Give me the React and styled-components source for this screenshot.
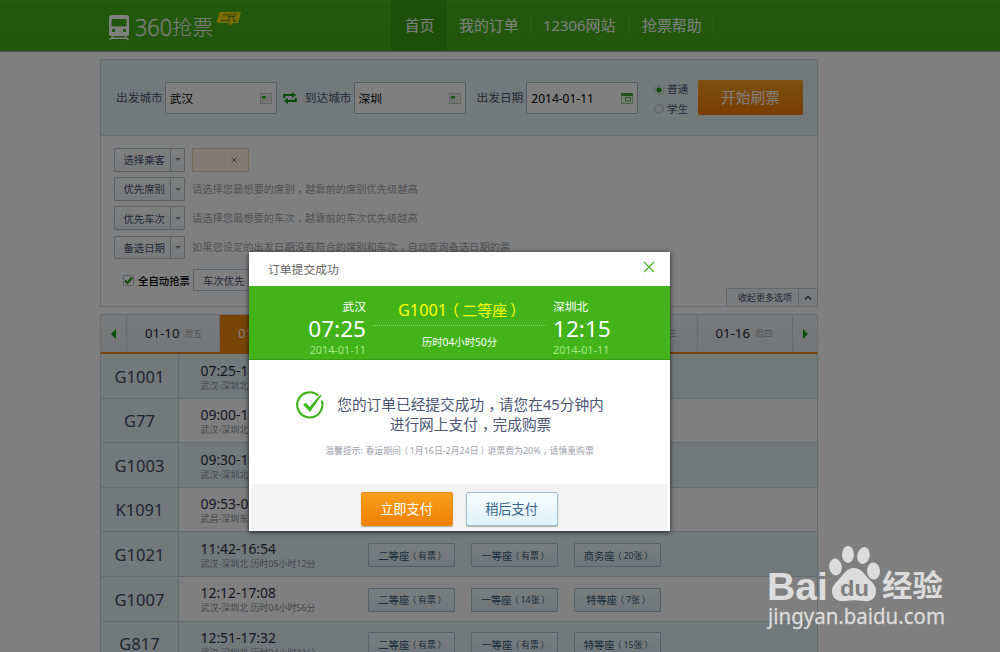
import React from 'react';
import styled, { createGlobalStyle, css } from 'styled-components';

const COLORS = {
  green: '#43b31a',
  orange: '#f08c14',
  ink: '#4a5272',
  blueBg: '#e7f1f7',
  blueLine: '#c3d6e0',
  line: '#d2dae0',
  muted: '#a4a4a8',
};

const GlobalStyle = createGlobalStyle`
  *, *::before, *::after {
    box-sizing: border-box;
  }

  html, body {
    margin: 0;
    height: 652px;
    overflow: hidden;
    background: white;
  }

  body {
    font-family: 'Noto Sans', 'Noto Sans CJK SC', sans-serif;
    font-size: 12px;
    line-height: 1;
    color: ${COLORS.ink};
  }
`;

const Screen = styled.div`
  position: relative;
  width: 1000px;
  height: 652px;
  overflow: hidden;
  white-space: nowrap;
`;

const MARK_SHIFT = {
  '，': '0.28em',
  '（': '-0.2em',
  '）': '0.2em',
};

// Full-width punctuation is nudged to the middle of its cell
const Mark = styled.span`
  display: inline-block;
  transform: translateX(${p => MARK_SHIFT[p.children]});
`;

const Text = ({ children }) =>
  children.split(/([，（）])/).map((part, i) => (i % 2 ? <Mark key={i}>{part}</Mark> : part));

/* Header */

const Header = styled.header`
  display: flex;
  height: 51px;
  padding-left: 108px;
  background: linear-gradient(#4abb20, #45b31b 10%, #43ad18);
  box-shadow: 0 1px 1px #b6a8ba;
`;

const Logo = styled.svg`
  width: 283px;
  height: 51px;
  flex-shrink: 0;
`;

const Nav = styled.nav`
  display: flex;
`;

const HomeLink = styled.a`
  width: 56px;
  height: 51px;
  display: flex;
  align-items: center;
  justify-content: center;
  font-size: 14.8px;
  color: white;
  background: #38a012;
  border-left: 1px solid #399a16;
`;

const NavLink = styled.a`
  width: ${p => p.width}px;
  height: 19px;
  margin-top: 16px;
  padding-left: 12px;
  display: flex;
  align-items: center;
  font-size: 14.9px;
  color: white;
  border-right: 1px solid #5cbc38;
`;

/* Search form */

const Main = styled.main`
  width: 718px;
  margin: 8px 0 0 100px;
`;

const SearchBar = styled.form`
  display: flex;
  align-items: center;
  height: 77px;
  padding: 1px 0 0 15px;
  background: ${COLORS.blueBg};
  border: 1px solid ${COLORS.blueLine};
`;

const Field = styled.label`
  display: flex;
  align-items: center;
  gap: 2px;
  font-size: 11.7px;
`;

const Input = styled.span`
  display: flex;
  align-items: center;
  justify-content: space-between;
  width: 112px;
  height: 32px;
  padding: 1px 4px 0;
  font-size: 11.7px;
  color: black;
  background: white;
  border: 1px solid #aeb8c2;
  border-radius: 1px;
`;

const SwapIcon = styled.svg`
  width: 14px;
  height: 12px;
  margin: 0 8px 0 6px;
`;

const DateField = styled(Field)`
  margin-left: 11px;

  ${Input} {
    margin-left: 1px;
    font-size: 12px;
  }
`;

const Radios = styled.div`
  display: flex;
  flex-direction: column;
  gap: 9.5px;
  margin: 3px 0 0 16px;
`;

const RadioLabel = styled.label`
  display: flex;
  align-items: center;
  gap: 3px;
  font-size: 10.4px;
`;

const Radio = styled.span`
  width: 10px;
  height: 10px;
  border: 1px solid #b6bfc6;
  border-radius: 50%;
  background: ${p => (p.checked ? 'radial-gradient(#139a13 0 2.3px, white 3px)' : '#e8eef2')};
`;

const SubmitButton = styled.button`
  width: 105px;
  height: 35px;
  margin: -2px 0 0 10px;
  padding: 0;
  border: none;
  border-radius: 2px;
  font: inherit;
  font-size: 14.8px;
  color: white;
  background: linear-gradient(#f9a01e, #f27a00);
`;

/* Options panel */

const Options = styled.section`
  display: flex;
  flex-direction: column;
  height: 171px;
  padding: 12px 0 0 13px;
  border: 1px solid ${COLORS.line};
  border-top: none;
`;

const OptionRow = styled.div`
  display: flex;
  align-items: center;
  gap: 7px;
  height: 29.2px;
  flex-shrink: 0;
  padding-bottom: 5.4px;
`;

const SplitButton = styled.div`
  display: flex;
  width: 71px;
  height: 23.8px;
  font-size: 10.4px;
  border: 1px solid #b6c4ce;
  border-radius: 1px;
  background: linear-gradient(white, #eff4f8);
`;

const SplitLabel = styled.span`
  flex: 1;
  display: flex;
  align-items: center;
  justify-content: flex-end;
  padding: 1px 5px 0 0;
  border-right: 1px solid #b6c4ce;
`;

const SplitCaret = styled.span`
  width: 13px;
  display: flex;
  align-items: center;
  justify-content: center;

  &::after {
    content: '';
    border: 3px solid transparent;
    border-top-color: #848d96;
    border-bottom: none;
  }
`;

const Passenger = styled.span`
  display: flex;
  align-items: center;
  justify-content: flex-end;
  width: 57px;
  height: 23.8px;
  padding-right: 11px;
  border: 1px solid #ecd5ad;
  border-radius: 1px;
  background: #fff6e6;
`;

const Hint = styled.span`
  font-size: 10.27px;
  color: ${COLORS.muted};
`;

const AutoRow = styled.div`
  display: flex;
  align-items: center;
  flex-shrink: 0;
  height: 22px;
  margin-top: 4px;
  padding-left: 9px;
  font-size: 10.4px;
`;

const Checkbox = styled.span`
  display: flex;
  align-items: center;
  justify-content: center;
  width: 11px;
  height: 11px;
  margin: 2px 4px 0 0;
  border: 1px solid #b8c2ca;
  border-radius: 1px;
`;

const AutoLabel = styled.span`
  width: 55px;
  padding-top: 2px;
  color: black;
  font-weight: 500;
`;

const PrioritySelect = styled.span`
  display: flex;
  align-items: center;
  width: 90px;
  height: 22px;
  padding: 2px 0 0 9px;
  border: 1px solid #b6c0ca;
`;

const Collapse = styled.div`
  display: flex;
  align-self: flex-end;
  flex-shrink: 0;
  width: 92px;
  height: 18px;
  margin: -3px -1px 0 0;
  font-size: 9px;
  background: #f2f6f9;
  border: 1px solid #c8d1d9;
  border-bottom: none;
`;

const CollapseLabel = styled.span`
  flex: 1;
  display: flex;
  align-items: center;
  padding-left: 11px;
  border-right: 1px solid #c8d1d9;
`;

const CollapseIcon = styled.svg`
  width: 18px;
  height: 16px;
`;

/* Date tabs */

const Tabs = styled.div`
  display: flex;
  height: 40px;
  margin-top: 7px;
  border: 1px solid ${COLORS.line};
  border-bottom: 2px solid ${COLORS.orange};
  background: linear-gradient(#f2f5f8, #e6ecf1);
`;

const TabArrow = styled.span`
  display: flex;
  align-items: center;
  justify-content: center;
  width: 25px;

  &::after {
    content: '';
    border: 5px solid transparent;
    ${p =>
      p.direction === 'left'
        ? css`
            border-right-color: #0aa00a;
            border-left: none;
          `
        : css`
            border-left-color: #0aa00a;
            border-right: none;
          `}
  }
`;

const Tab = styled.span`
  flex: ${p => (p.first ? '0 0 93px' : '1')};
  display: flex;
  align-items: center;
  gap: 5px;
  padding-left: 18px;
  font-size: 13.2px;
  color: ${p => (p.active ? 'white' : '#1d1f38')};
  background: ${p => (p.active ? '#f28a0c' : 'none')};
  border-left: 1px solid #cfd9e0;

  & + ${TabArrow} {
    border-left: 1px solid #cfd9e0;
  }
`;

const Weekday = styled.small`
  font-size: 8.8px;
  color: ${p => (p.active ? 'white' : '#a6aab0')};
  padding-top: 2px;
`;

/* Train list */

const Train = styled.div`
  display: flex;
  height: 44.6px;
  background: ${p => (p.tinted ? COLORS.blueBg : 'white')};
  border: 1px solid ${COLORS.blueLine};
  border-top: none;
`;

const TrainCode = styled.strong`
  display: flex;
  align-items: center;
  justify-content: center;
  width: 78px;
  padding-top: 2px;
  font-size: 16.5px;
  font-weight: 400;
  color: #3f4865;
  background: ${COLORS.blueBg};
  border-right: 1px solid ${COLORS.blueLine};
`;

const TrainTimes = styled.div`
  width: 189px;
  padding: 8.500px 0 0 21.5px;
`;

const TimeRange = styled.div`
  font-size: 13.9px;
  line-height: 15px;
  color: #2a2c46;
`;

const Route = styled.div`
  font-size: 8.95px;
  line-height: 15px;
  color: #8c9097;
`;

const Seats = styled.div`
  display: flex;
  align-items: center;
  gap: 16px;
  padding-top: 2px;
`;

const Seat = styled.span`
  display: flex;
  align-items: center;
  justify-content: center;
  width: 87px;
  height: 24px;
  padding-top: 1px;
  font-size: 10.3px;
  color: #31587c;
  background: linear-gradient(#f2fafd, #dfedf3);
  border: 1px solid #a6c2d0;
  border-radius: 1px;
`;

const SeatCount = styled.small`
  padding-top: 1px;
  font-size: 8.9px;
`;

/* Dialog */

const Overlay = styled.div`
  position: absolute;
  inset: 0;
  background: rgba(0, 0, 0, 0.5);
`;

const Dialog = styled.section`
  position: absolute;
  left: 249px;
  top: 252px;
  width: 421px;
  height: 279px;
  display: flex;
  flex-direction: column;
  background: white;
  box-shadow: 0 1px 5px rgba(0, 0, 0, 0.75);
`;

const DialogHeader = styled.header`
  display: flex;
  justify-content: space-between;
  height: 34px;
  padding: 12px 15px 0 19px;
  font-size: 11.8px;
  color: #666;
`;

const CloseIcon = styled.svg`
  width: 12px;
  height: 12px;
  margin-top: -3px;
`;

const Trip = styled.div`
  display: flex;
  height: 74px;
  color: white;
  background: ${COLORS.green};
  border-bottom: 1px solid #3a9f16;
`;

const Station = styled.div`
  width: 117px;
  padding-top: 13px;
  text-align: ${p => p.align};
`;

const StationName = styled.div`
  font-size: 11.8px;
  line-height: 15px;
`;

const StationTime = styled.div`
  font-size: 22.6px;
  line-height: 29px;
`;

const StationDate = styled.div`
  font-size: 10.8px;
  line-height: 14px;
  color: #a4ec82;
`;

const TripInfo = styled.div`
  display: flex;
  flex-direction: column;
  width: 173px;
  margin: 0 7px;
`;

const TripTrain = styled.div`
  height: 40px;
  padding: 15px 0 0 25px;
  font-size: 16.3px;
  line-height: 18px;
  color: #ff0;
  border-bottom: 1px dotted #8bd66c;
`;

const TripSeat = styled.span`
  font-size: 15px;
`;

const Duration = styled.div`
  padding: 10.5px 0 0 49px;
  font-size: 10.3px;
  line-height: 11px;
`;

const Result = styled.div`
  display: flex;
  flex-direction: column;
  align-items: center;
  height: 124px;
  padding-top: 30px;
`;

const ResultMessage = styled.div`
  display: flex;
  gap: 12px;
  margin-left: -20px;
  height: 54px;
`;

const CheckIcon = styled.svg`
  width: 30px;
  height: 30px;
`;

const Message = styled.p`
  margin: 5px 0 0;
  font-size: 14.7px;
  line-height: 19.5px;
  text-align: center;
  color: #4c5473;
`;

const Tip = styled.p`
  margin: 1px 0 0;
  font-size: 8.9px;
  line-height: 12px;
  color: #a0a0ac;
`;

const DialogFooter = styled.footer`
  display: flex;
  flex: 1;
  gap: 13px;
  margin: 0 2px 1px;
  padding: 8px 0 0 110px;
  background: #f3f3f3;
`;

const DialogButton = styled.button`
  width: 92px;
  height: 34px;
  padding: 1px 1px 0 0;
  font: inherit;
  font-size: 13.2px;
  color: ${p => (p.primary ? 'white' : '#36648a')};
  background: ${p =>
    p.primary ? 'linear-gradient(#f9a01c, #f08000)' : 'linear-gradient(#f8fdff, #def1f9)'};
  border: 1px solid ${p => (p.primary ? '#ec8c12' : '#9bbccb')};
  border-radius: 2px;
  box-shadow: 0 1px 1px rgba(80, 80, 80, 0.45);
`;

const Watermark = styled.svg`
  position: absolute;
  left: 760px;
  top: 540px;
  width: 190px;
  height: 94px;
`;

const GridIcon = () => (
  <svg width="12" height="11" viewBox="0 0 12 11">
    <rect x=".5" y=".5" width="11" height="10" fill="#f0f2f0" stroke="#c0cdc3" />
    <path d="M4 1v9M8 1v9M1 4h10M1 7h10" stroke="#dbe1dc" />
    <path d="M2 3h4v2.500H2z" fill="#2faf1c" />
  </svg>
);

const CalendarIcon = () => (
  <svg width="12" height="11" viewBox="0 0 12 11">
    <rect x=".5" y=".5" width="11" height="10" fill="#f0f8ee" stroke="#a5cf9d" />
    <path d="M0 0h12v3H0z" fill="#45a833" />
    <rect x="4.5" y="4.5" width="5" height="3.5" fill="none" stroke="#68ba59" />
  </svg>
);

const NAV_LINKS = [
  { label: '我的订单', width: 84 },
  { label: '12306网站', width: 99 },
  { label: '抢票帮助', width: 84 },
];

const DATES = [
  ['01-10', '周五'],
  ['01-11', '周六'],
  ['01-12', '周日'],
  ['01-13', '周一'],
  ['01-14', '周二'],
  ['01-15', '周三'],
  ['01-16', '周四'],
];

const HINTS = [
  ['优先席别', '请选择您最想要的席别，越靠前的席别优先级越高'],
  ['优先车次', '请选择您最想要的车次，越靠前的车次优先级越高'],
  ['备选日期', '如果您设定的出发日期没有符合的席别和车次，自动查询备选日期的票'],
];

const TRAINS = [
  { code: 'G1001', time: '07:25-12:15', route: '武汉-深圳北 历时04小时50分', seats: [] },
  { code: 'G77', time: '09:00-13:48', route: '武汉-深圳北 历时04小时48分', seats: [] },
  { code: 'G1003', time: '09:30-14:20', route: '武汉-深圳北 历时04小时50分', seats: [] },
  { code: 'K1091', time: '09:53-00:22', route: '武昌-深圳东 历时14小时29分', seats: [] },
  {
    code: 'G1021',
    time: '11:42-16:54',
    route: '武汉-深圳北 历时05小时12分',
    seats: [['二等座', '有票'], ['一等座', '有票'], ['商务座', '20张']],
  },
  {
    code: 'G1007',
    time: '12:12-17:08',
    route: '武汉-深圳北 历时04小时56分',
    seats: [['二等座', '有票'], ['一等座', '14张'], ['特等座', '7张']],
  },
  {
    code: 'G817',
    time: '12:51-17:32',
    route: '武汉-深圳北 历时04小时41分',
    seats: [['二等座', '有票'], ['一等座', '有票'], ['特等座', '15张']],
  },
];

const SiteHeader = () => (
  <Header>
    <Logo viewBox="0 0 283 51">
      <path
        fill="#fff"
        fillRule="evenodd"
        d="M4 15h14q3 0 3 3v16q0 2-2 2H3q-2 0-2-2V18q0-3 3-3zm.5 4q-1 0-1 1v6.500h15V20q0-1-1-1zM4 29h3v3H4zm11 0h3v3h-3z"
      />
      <path d="M5 36.500L1.500 40M17 36.500L20.500 40M4 38.300h14" stroke="#fff" strokeWidth="1.500" />
      <text x="27" y="36" fontSize="23.500" fontWeight="300" fontFamily="'Open Sans', sans-serif" fill="#fff" stroke="#fff" strokeWidth=".3" textLength="37" lengthAdjust="spacingAndGlyphs">360</text>
      <text x="64" y="35.300" fontSize="20.500" fontWeight="300" fill="#fff" textLength="41" lengthAdjust="spacingAndGlyphs">抢票</text>
      <path d="M111.500 12h21.500l-3 11H125l-3.500 3v-3H108.500z" fill="#f4dc00" />
      <text x="112" y="21.200" fontSize="9.500" fill="#3f6d00" transform="translate(4.500 0) skewX(-12)" textLength="16">二代</text>
    </Logo>
    <Nav>
      <HomeLink>首页</HomeLink>
      {NAV_LINKS.map(({ label, width }) => (
        <NavLink key={label} width={width}>{label}</NavLink>
      ))}
    </Nav>
  </Header>
);

const Search = () => (
  <SearchBar>
    <Field>出发城市<Input>武汉<GridIcon /></Input></Field>
    <SwapIcon viewBox="0 0 14 12" fill="none" stroke="#079607" strokeWidth="2">
      <path d="M1.200 6.200V3H9M12.800 5.800V9H5" />
      <path d="M9 0L13 3L9 6zM5 6L1 9L5 12z" fill="#079607" stroke="none" />
    </SwapIcon>
    <Field>到达城市<Input>深圳<GridIcon /></Input></Field>
    <DateField>出发日期<Input>2014-01-11<CalendarIcon /></Input></DateField>
    <Radios>
      <RadioLabel><Radio checked />普通</RadioLabel>
      <RadioLabel><Radio />学生</RadioLabel>
    </Radios>
    <SubmitButton type="button">开始刷票</SubmitButton>
  </SearchBar>
);

const Split = ({ children }) => (
  <SplitButton>
    <SplitLabel>{children}</SplitLabel>
    <SplitCaret />
  </SplitButton>
);

const OptionsPanel = () => (
  <Options>
    <OptionRow>
      <Split>选择乘客</Split>
      <Passenger>
        <svg width="6" height="6" viewBox="0 0 6 6">
          <path d="M.5 .5l5 5M5.500 .5l-5 5" stroke="#777" />
        </svg>
      </Passenger>
    </OptionRow>
    {HINTS.map(([label, hint]) => (
      <OptionRow key={label}>
        <Split>{label}</Split>
        <Hint><Text>{hint}</Text></Hint>
      </OptionRow>
    ))}
    <AutoRow>
      <Checkbox>
        <svg width="9" height="9" viewBox="0 0 9 9">
          <path d="M1 4.500L3.500 7L8 1.500" fill="none" stroke="#079607" strokeWidth="2" />
        </svg>
      </Checkbox>
      <AutoLabel>全自动抢票</AutoLabel>
      <PrioritySelect>车次优先</PrioritySelect>
    </AutoRow>
    <Collapse>
      <CollapseLabel>收起更多选项</CollapseLabel>
      <CollapseIcon viewBox="0 0 18 16">
        <path d="M6 10.500L9 7.500L12 10.500" fill="none" stroke="#333c4c" strokeWidth="1.300" />
      </CollapseIcon>
    </Collapse>
  </Options>
);

const DateTabs = () => (
  <Tabs>
    <TabArrow direction="left" />
    {DATES.map(([date, weekday], i) => (
      <Tab key={date} first={i === 0} active={i === 1}>
        {date}
        <Weekday active={i === 1}>{weekday}</Weekday>
      </Tab>
    ))}
    <TabArrow direction="right" />
  </Tabs>
);

const TrainRow = ({ code, time, route, seats, tinted }) => (
  <Train tinted={tinted}>
    <TrainCode>{code}</TrainCode>
    <TrainTimes>
      <TimeRange>{time}</TimeRange>
      <Route>{route}</Route>
    </TrainTimes>
    <Seats>
      {seats.map(([name, count]) => (
        <Seat key={name}>
          {name}
          <SeatCount><Text>{`（${count}）`}</Text></SeatCount>
        </Seat>
      ))}
    </Seats>
  </Train>
);

const OrderDialog = () => (
  <Dialog>
    <DialogHeader>
      订单提交成功
      <CloseIcon viewBox="0 0 12 12">
        <path d="M1 1l10 10M11 1L1 11" stroke="#4fb52c" strokeWidth="1.300" />
      </CloseIcon>
    </DialogHeader>
    <Trip>
      <Station align="right">
        <StationName>武汉</StationName>
        <StationTime>07:25</StationTime>
        <StationDate>2014-01-11</StationDate>
      </Station>
      <TripInfo>
        <TripTrain>G1001<TripSeat><Text>（二等座）</Text></TripSeat></TripTrain>
        <Duration>历时04小时50分</Duration>
      </TripInfo>
      <Station align="left">
        <StationName>深圳北</StationName>
        <StationTime>12:15</StationTime>
        <StationDate>2014-01-11</StationDate>
      </Station>
    </Trip>
    <Result>
      <ResultMessage>
        <CheckIcon viewBox="0 0 30 30">
          <path d="M23.300 5.600A12.600 12.600 0 1 0 26.600 10.500" fill="none" stroke="#3fb31a" strokeWidth="2.100" />
          <path d="M8 14.500l2.800-1.800 3.700 4.300L25.500 4.500l1 1L15 22z" fill="#3fb31a" />
        </CheckIcon>
        <Message>
          <Text>您的订单已经提交成功，请您在45分钟内</Text>
          <br />
          <Text>进行网上支付，完成购票</Text>
        </Message>
      </ResultMessage>
      <Tip><Text>温馨提示: 春运期间（1月16日-2月24日）退票费为20%，请慎重购票</Text></Tip>
    </Result>
    <DialogFooter>
      <DialogButton primary>立即支付</DialogButton>
      <DialogButton>稍后支付</DialogButton>
    </DialogFooter>
  </Dialog>
);

const BaiduWatermark = () => (
  <Watermark viewBox="0 0 190 94" fill="#dcdcdc">
    <text x="7" y="60" fontSize="39" fontWeight="700" fontFamily="'Liberation Sans', sans-serif" textLength="61" lengthAdjust="spacingAndGlyphs">Bai</text>
    <ellipse cx="75.500" cy="27" rx="6.300" ry="8.500" transform="rotate(-8 75.500 27)" />
    <ellipse cx="88" cy="14.500" rx="6" ry="8.500" />
    <ellipse cx="103.500" cy="15.500" rx="6.200" ry="8.500" transform="rotate(12 103.500 15.500)" />
    <ellipse cx="113.500" cy="31" rx="6.500" ry="8.500" transform="rotate(-5 113.500 31)" />
    <path d="M94 28c6 0 9 4 12 8 4 5 10 8 10 15 0 8-6 11-12 10-7-1-13-1-19 0-8 1-13-3-13-10 0-6 5-9 9-14 4-5 7-9 13-9z" />
    <text x="80" y="56" fontSize="22" fontWeight="700" fontFamily="'Liberation Sans', sans-serif" fill="#808080" textLength="29" lengthAdjust="spacingAndGlyphs">du</text>
    <text x="122" y="56" fontSize="30" fontWeight="700" textLength="61" lengthAdjust="spacingAndGlyphs">经验</text>
    <text x="8" y="84" fontSize="21.500" textLength="177" lengthAdjust="spacingAndGlyphs" stroke="#dcdcdc" strokeWidth=".3">jingyan.baidu.com</text>
  </Watermark>
);

const App = () => (
  <Screen>
    <GlobalStyle />
    <SiteHeader />
    <Main>
      <Search />
      <OptionsPanel />
      <DateTabs />
      {TRAINS.map((train, i) => (
        <TrainRow key={train.code} tinted={i % 2 === 0} {...train} />
      ))}
    </Main>
    <Overlay />
    <OrderDialog />
    <BaiduWatermark />
  </Screen>
);

export default App;
